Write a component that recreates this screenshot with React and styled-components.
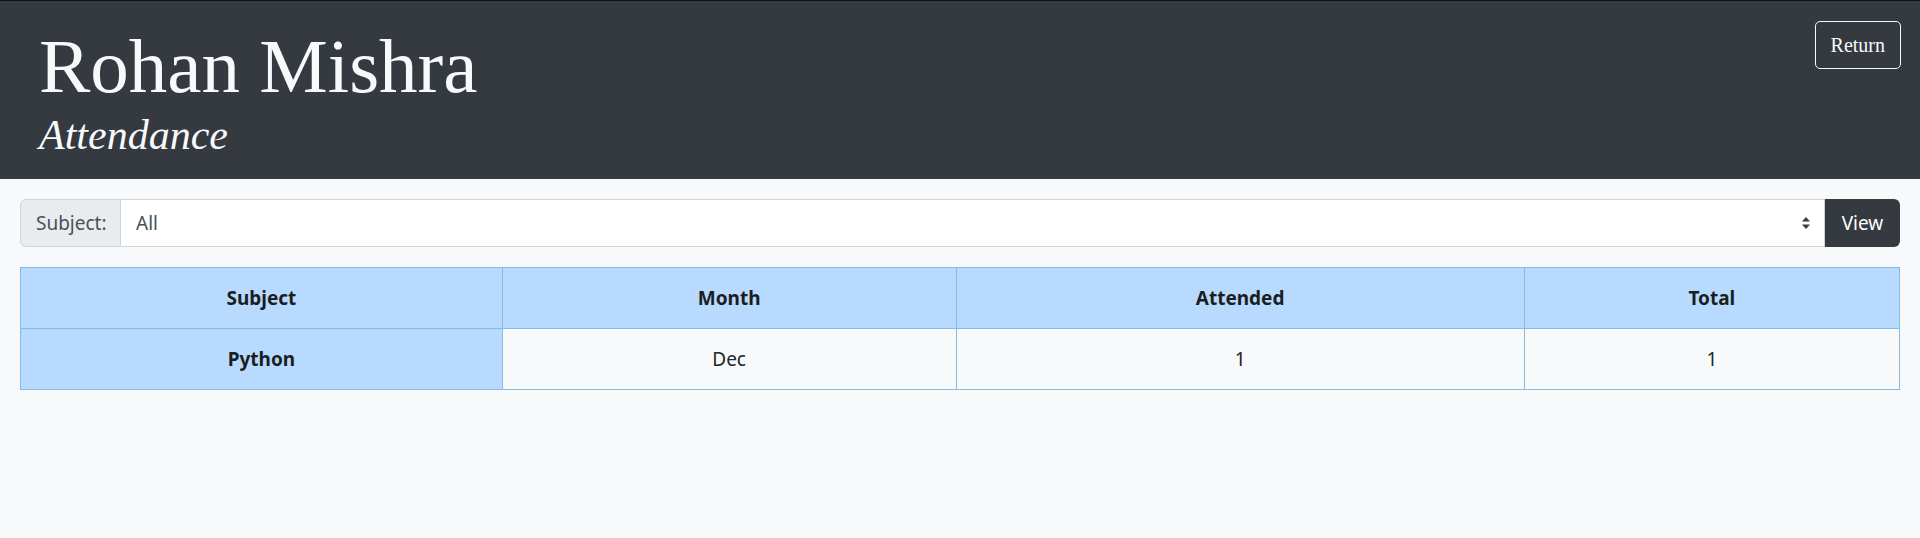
import React from 'react';
import styled, { createGlobalStyle } from 'styled-components';

const GlobalStyle = createGlobalStyle`
  body {
    margin: 0;
    background: #f8f9fa;
    font-family: "Noto Sans", "Open Sans", sans-serif;
    color: #212529;
  }
  * { box-sizing: border-box; }
`;

const Header = styled.header`
  background-color: #343a40;
  border-top: 1px solid #111;
  padding: 20px 19px 23px 39px;
  display: flex;
  justify-content: space-between;
  align-items: flex-start;
`;

const Titles = styled.div`
  display: flex;
  flex-direction: column;
`;

const Name = styled.h1`
  margin: 7px 0 0;
  font-family: "Liberation Serif", serif;
  font-weight: normal;
  font-size: 77px;
  line-height: 1;
  color: #f8f9fa;
  white-space: nowrap;
`;

const SubTitle = styled.h2`
  margin: 9px 0 0;
  font-family: "Liberation Serif", serif;
  font-style: italic;
  font-weight: normal;
  font-size: 42px;
  line-height: 1;
  color: #f8f9fa;
`;

const ReturnBtn = styled.button`
  height: 48px;
  padding: 0 15px;
  background: transparent;
  border: 1px solid #f8f9fa;
  border-radius: 5px;
  color: #f8f9fa;
  font-family: "Liberation Serif", serif;
  font-size: 20px;
`;

const Main = styled.main`
  padding: 20px 20px 0;
`;

const InputGroup = styled.div`
  display: flex;
  height: 48px;
`;

const Label = styled.div`
  display: flex;
  align-items: center;
  width: 101px;
  padding: 0 15px;
  background: #e9ecef;
  border: 1px solid #ced4da;
  border-radius: 6px 0 0 6px;
  color: #495057;
  font-size: 19px;
`;

const Select = styled.div`
  flex: 1;
  display: flex;
  align-items: center;
  justify-content: space-between;
  padding: 0 13px 0 15px;
  background: #fff;
  border: 1px solid #ced4da;
  border-left: none;
  color: #495057;
  font-size: 19px;
`;

const ViewBtn = styled.button`
  width: 75px;
  background: #343a40;
  border: none;
  border-radius: 0 6px 6px 0;
  color: #fff;
  font-family: "Noto Sans", sans-serif;
  font-size: 19px;
`;

const Table = styled.table`
  margin-top: 20px;
  width: 100%;
  border-collapse: collapse;
  table-layout: fixed;
`;

const Cell = styled.td`
  height: 61px;
  padding: 0 12px;
  text-align: center;
  border: 1px solid #86bbe4;
  font-size: 19px;
  font-weight: ${p => (p.$head ? 700 : 400)};
  background: ${p => (p.$primary ? '#b8daff' : 'transparent')};
  color: ${p => (p.$head ? '#1b1e21' : '#212529')};
`;

const Arrows = () => (
  <svg width="10" height="14" viewBox="0 0 10 14">
    <path d="M5 1 L9 5.5 L1 5.5 Z" fill="#343a40" />
    <path d="M5 13 L9 8.5 L1 8.5 Z" fill="#343a40" />
  </svg>
);

const columns = ['Subject', 'Month', 'Attended', 'Total'];
const widths = ['25.64%', '24.15%', '30.24%', '19.97%'];

export default function App() {
  return (
    <>
      <GlobalStyle />
      <Header>
        <Titles>
          <Name>Rohan Mishra</Name>
          <SubTitle>Attendance</SubTitle>
        </Titles>
        <ReturnBtn>Return</ReturnBtn>
      </Header>
      <Main>
        <InputGroup>
          <Label>Subject:</Label>
          <Select>
            <span>All</span>
            <Arrows />
          </Select>
          <ViewBtn>View</ViewBtn>
        </InputGroup>
        <Table>
          <colgroup>
            {widths.map((w, i) => <col key={i} style={{ width: w }} />)}
          </colgroup>
          <thead>
            <tr>
              {columns.map(c => (
                <Cell as="th" key={c} $head $primary>{c}</Cell>
              ))}
            </tr>
          </thead>
          <tbody>
            <tr>
              <Cell as="th" $head $primary>Python</Cell>
              <Cell>Dec</Cell>
              <Cell>1</Cell>
              <Cell>1</Cell>
            </tr>
          </tbody>
        </Table>
      </Main>
    </>
  );
}
